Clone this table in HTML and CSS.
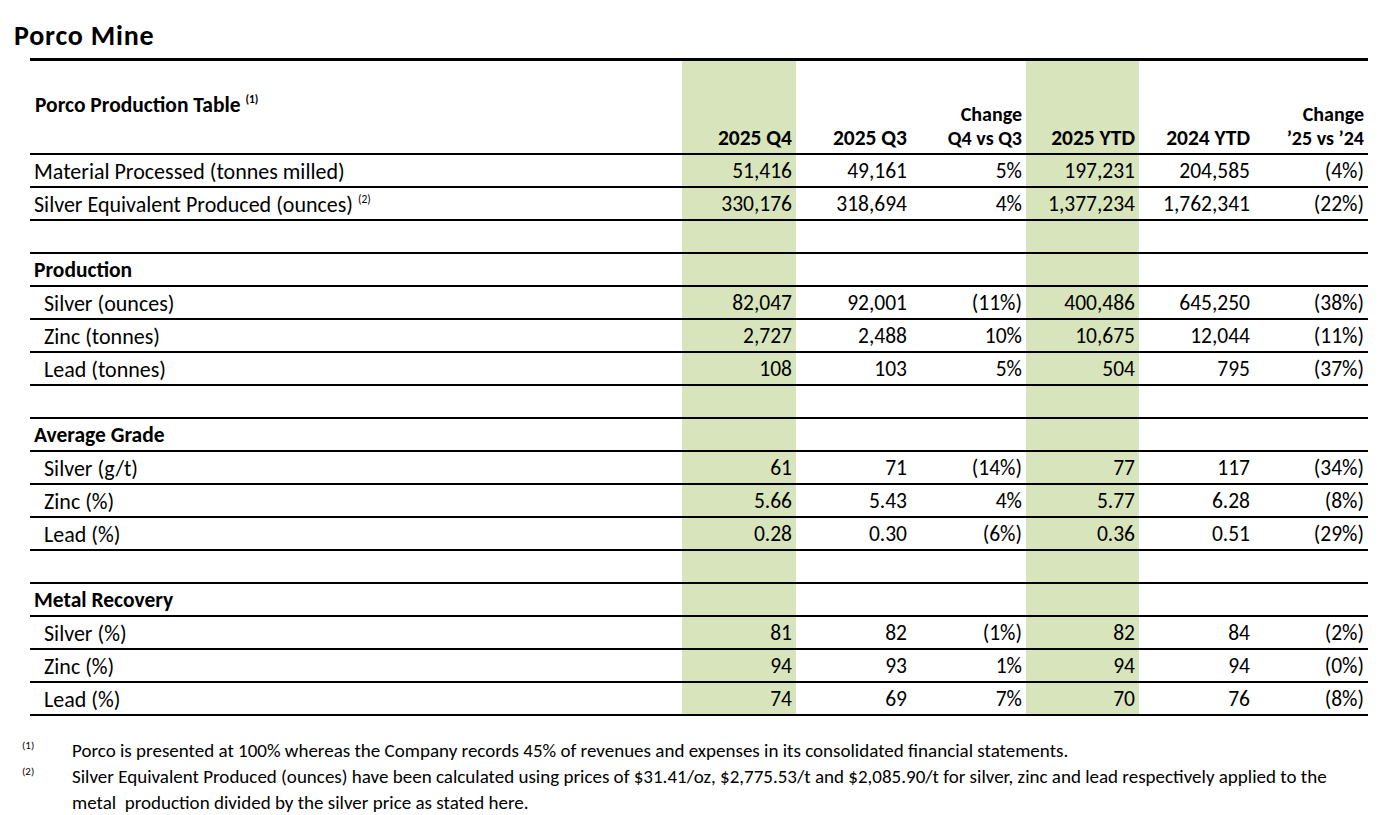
FILE: index.html
```html
<!DOCTYPE html>
<html lang="en">
<head>
<meta charset="utf-8">
<title>Porco Mine</title>
<link rel="stylesheet" href="styles.css">
</head>
<body>
<div class="page">
  <h1 class="title">Porco Mine</h1>
  <table class="prod">
    <colgroup>
      <col class="c-label">
      <col class="c-q4">
      <col class="c-q3">
      <col class="c-chg1">
      <col class="c-ytd">
      <col class="c-ytd24">
      <col class="c-chg2">
    </colgroup>
    <thead>
      <tr class="head">
        <th class="lbl table-name">Porco Production Table <sup>(1)</sup></th>
        <th class="num hl">2025 Q4</th>
        <th class="num">2025 Q3</th>
        <th class="num two"><span class="hline">Change</span><span class="hline">Q4 vs Q3</span></th>
        <th class="num hl">2025 YTD</th>
        <th class="num">2024 YTD</th>
        <th class="num two"><span class="hline">Change</span><span class="hline">’25 vs ’24</span></th>
      </tr>
    </thead>
    <tbody>
      <tr><td class="lbl">Material Processed (tonnes milled)</td><td class="num hl">51,416</td><td class="num">49,161</td><td class="num">5%</td><td class="num hl">197,231</td><td class="num">204,585</td><td class="num">(4%)</td></tr>
      <tr><td class="lbl">Silver Equivalent Produced (ounces) <sup>(2)</sup></td><td class="num hl">330,176</td><td class="num">318,694</td><td class="num">4%</td><td class="num hl">1,377,234</td><td class="num">1,762,341</td><td class="num">(22%)</td></tr>
      <tr><td class="lbl"></td><td class="hl"></td><td></td><td></td><td class="hl"></td><td></td><td></td></tr>

      <tr><td class="lbl section">Production</td><td class="hl"></td><td></td><td></td><td class="hl"></td><td></td><td></td></tr>
      <tr><td class="lbl sub">Silver (ounces)</td><td class="num hl">82,047</td><td class="num">92,001</td><td class="num">(11%)</td><td class="num hl">400,486</td><td class="num">645,250</td><td class="num">(38%)</td></tr>
      <tr><td class="lbl sub">Zinc (tonnes)</td><td class="num hl">2,727</td><td class="num">2,488</td><td class="num">10%</td><td class="num hl">10,675</td><td class="num">12,044</td><td class="num">(11%)</td></tr>
      <tr><td class="lbl sub">Lead (tonnes)</td><td class="num hl">108</td><td class="num">103</td><td class="num">5%</td><td class="num hl">504</td><td class="num">795</td><td class="num">(37%)</td></tr>
      <tr><td class="lbl"></td><td class="hl"></td><td></td><td></td><td class="hl"></td><td></td><td></td></tr>

      <tr><td class="lbl section">Average Grade</td><td class="hl"></td><td></td><td></td><td class="hl"></td><td></td><td></td></tr>
      <tr><td class="lbl sub">Silver (g/t)</td><td class="num hl">61</td><td class="num">71</td><td class="num">(14%)</td><td class="num hl">77</td><td class="num">117</td><td class="num">(34%)</td></tr>
      <tr><td class="lbl sub">Zinc (%)</td><td class="num hl">5.66</td><td class="num">5.43</td><td class="num">4%</td><td class="num hl">5.77</td><td class="num">6.28</td><td class="num">(8%)</td></tr>
      <tr><td class="lbl sub">Lead (%)</td><td class="num hl">0.28</td><td class="num">0.30</td><td class="num">(6%)</td><td class="num hl">0.36</td><td class="num">0.51</td><td class="num">(29%)</td></tr>
      <tr><td class="lbl"></td><td class="hl"></td><td></td><td></td><td class="hl"></td><td></td><td></td></tr>

      <tr><td class="lbl section">Metal Recovery</td><td class="hl"></td><td></td><td></td><td class="hl"></td><td></td><td></td></tr>
      <tr><td class="lbl sub">Silver (%)</td><td class="num hl">81</td><td class="num">82</td><td class="num">(1%)</td><td class="num hl">82</td><td class="num">84</td><td class="num">(2%)</td></tr>
      <tr><td class="lbl sub">Zinc (%)</td><td class="num hl">94</td><td class="num">93</td><td class="num">1%</td><td class="num hl">94</td><td class="num">94</td><td class="num">(0%)</td></tr>
      <tr><td class="lbl sub">Lead (%)</td><td class="num hl">74</td><td class="num">69</td><td class="num">7%</td><td class="num hl">70</td><td class="num">76</td><td class="num">(8%)</td></tr>
    </tbody>
  </table>

  <div class="notes">
    <div class="note">
      <span class="mark">(1)</span>
      <p class="note-text">Porco is presented at 100% whereas the Company records 45% of revenues and expenses in its consolidated financial statements.</p>
    </div>
    <div class="note">
      <span class="mark">(2)</span>
      <p class="note-text">Silver Equivalent Produced (ounces) have been calculated using prices of $31.41/oz, $2,775.53/t and $2,085.90/t for silver, zinc and lead respectively applied to the metal&nbsp; production divided by the silver price as stated here.</p>
    </div>
  </div>
</div>
</body>
</html>
```

FILE: styles.css
```css
* {
  box-sizing: border-box;
}

html, body {
  margin: 0;
  padding: 0;
  background: #ffffff;
}

body {
  font-family: "Carlito", "Lato", "Liberation Sans", sans-serif;
  color: #000000;
}

.page {
  padding: 21px 12px 0 12px;
}

.title {
  margin: 0 0 0 2px;
  font-size: 28px;
  line-height: 30px;
  font-weight: 700;
  letter-spacing: 0.8px;
  height: 37px;
}

.prod {
  margin-left: 18px;
  width: 1338px;
  table-layout: fixed;
  border-collapse: separate;
  border-spacing: 0;
  border-top: 3px solid #000;
  font-size: 21.5px;
}

.c-label { width: 652px; }
.c-q4 { width: 114px; }
.c-q3 { width: 115px; }
.c-chg1 { width: 115px; }
.c-ytd { width: 113px; }
.c-ytd24 { width: 115px; }
.c-chg2 { width: 114px; }

.prod th,
.prod td {
  padding: 0 4px;
  border-bottom: 2px solid #000;
  white-space: nowrap;
}

.prod td {
  height: 33px;
  padding-top: 2px;
  line-height: 29px;
  font-weight: 400;
  vertical-align: top;
}

.head th {
  height: 94px;
  font-weight: 700;
  line-height: 22px;
  vertical-align: bottom;
  padding-bottom: 4px;
}

.head th.two {
  padding-bottom: 3px;
}

.hline {
  display: block;
  font-size: 20px;
  line-height: 24px;
}

.head th.table-name {
  vertical-align: top;
  text-align: left;
  padding-top: 33px;
  padding-left: 5px;
  padding-bottom: 0;
}

.num {
  text-align: right;
}

.hl {
  background: #d8e4bc;
}

.lbl {
  text-align: left;
  padding-left: 5px;
}

.prod td.lbl {
  font-size: 22px;
}

.prod td.lbl.sub {
  padding-left: 14px;
}

.prod td.lbl.section {
  font-weight: 700;
  font-size: 21.5px;
}

sup {
  font-size: 11.5px;
  line-height: 0;
  vertical-align: 9px;
}

.head sup {
  font-weight: 700;
}

.notes {
  padding-top: 22px;
  font-size: 19px;
  line-height: 26px;
}

.note {
  display: flex;
  align-items: flex-start;
}

.mark {
  flex: 0 0 60px;
  font-size: 11px;
  line-height: 16px;
  padding-left: 10px;
}

.note-text {
  margin: 0;
  width: 1282px;
}
```
